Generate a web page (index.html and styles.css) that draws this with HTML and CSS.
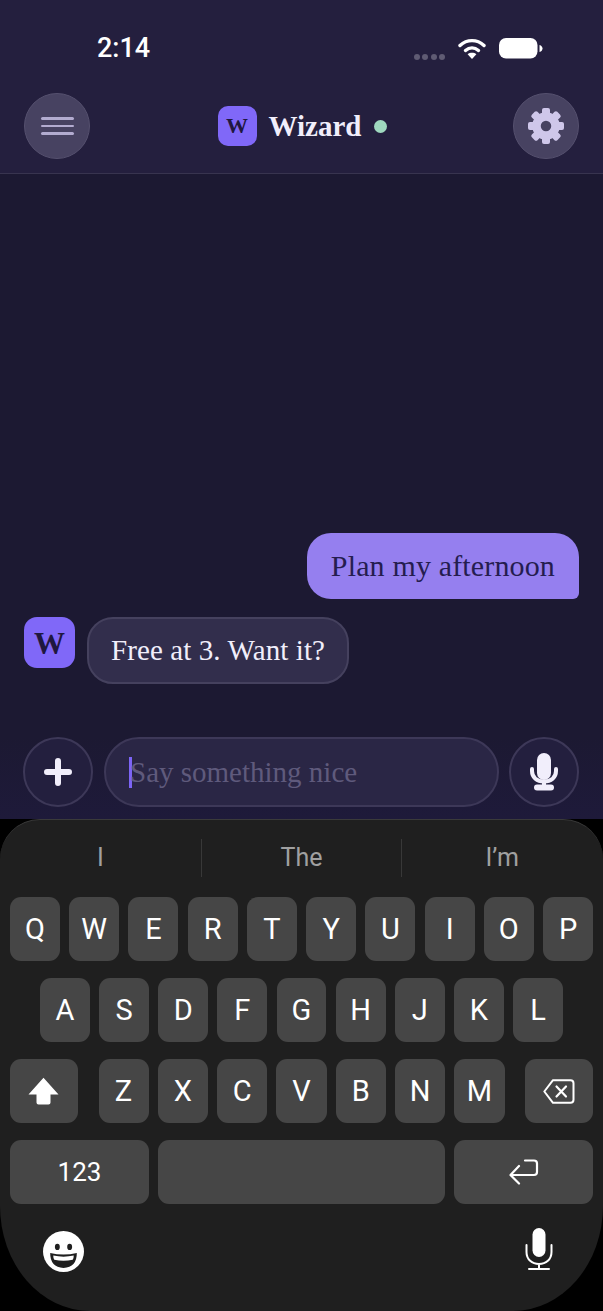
FILE: index.html
```html
<!DOCTYPE html>
<html lang="en">
<head>
<meta charset="utf-8">
<title>Wizard</title>
<link rel="stylesheet" href="styles.css">
</head>
<body>
<div class="app">
  <header class="top">
    <div class="status">
      <span class="time">2:14</span>
      <div class="status-icons">
        <div class="signal"><i></i><i></i><i></i><i></i></div>
        <svg class="wifi" viewBox="0 0 28 21"><path d="M2 7.500C9 1 19 1 26 7.500" fill="none" stroke="#fff" stroke-width="3.400" stroke-linecap="round"/><path d="M7.500 12.500C11.500 9 16.500 9 20.500 12.500" fill="none" stroke="#fff" stroke-width="3.400" stroke-linecap="round"/><path d="M14 21l-4.400-4.800c2.600-1.900 6.200-1.900 8.800 0z" fill="#fff"/></svg>
        <svg class="battery" viewBox="0 0 44 21"><rect x="0" y="0" width="38.500" height="20.500" rx="7" fill="#fff"/><path d="M40.500 7c2 .5 3 2 3 3.500s-1 3-3 3.500z" fill="#fff"/></svg>
      </div>
    </div>
    <div class="nav">
      <button class="round-btn"><span class="burger"><i></i><i></i><i></i></span></button>
      <div class="brand">
        <div class="logo">W</div>
        <span class="brand-name">Wizard</span>
        <span class="online"></span>
      </div>
      <button class="round-btn"><svg class="gear" viewBox="0 0 36 36"><circle cx="18" cy="18" r="9.500" fill="none" stroke="#cfc7ea" stroke-width="8.500"/><g fill="#cfc7ea"><rect x="14" y="0" width="8" height="8" rx="2"/><rect x="14" y="0" width="8" height="8" rx="2" transform="rotate(45 18 18)"/><rect x="14" y="0" width="8" height="8" rx="2" transform="rotate(90 18 18)"/><rect x="14" y="0" width="8" height="8" rx="2" transform="rotate(135 18 18)"/><rect x="14" y="0" width="8" height="8" rx="2" transform="rotate(180 18 18)"/><rect x="14" y="0" width="8" height="8" rx="2" transform="rotate(225 18 18)"/><rect x="14" y="0" width="8" height="8" rx="2" transform="rotate(270 18 18)"/><rect x="14" y="0" width="8" height="8" rx="2" transform="rotate(315 18 18)"/></g></svg></button>
    </div>
  </header>

  <main class="chat">
    <div class="msg-user">Plan my afternoon</div>
    <div class="msg-row">
      <div class="avatar">W</div>
      <div class="msg-bot">Free at 3. Want it?</div>
    </div>
  </main>

  <div class="composer">
    <button class="comp-btn"><svg class="plus" viewBox="0 0 28 28"><path d="M14 3v22M3 14h22" stroke="#f1eefb" stroke-width="6" stroke-linecap="round"/></svg></button>
    <div class="field"><span class="caret"></span><span class="placeholder">Say something nice</span></div>
    <button class="comp-btn"><svg class="mic-fill" viewBox="0 0 30 38"><rect x="8" y="0" width="14" height="27" rx="7" fill="#f1eefb"/><path d="M3 16v2c0 6.500 5 10.500 12 10.500s12-4 12-10.500v-2" fill="none" stroke="#f1eefb" stroke-width="4" stroke-linecap="round"/><rect x="13" y="28" width="4" height="6" fill="#f1eefb"/><rect x="5" y="31.500" width="20" height="6" rx="3" fill="#f1eefb"/></svg></button>
  </div>

  <div class="keyboard">
    <div class="suggest">
      <span>I</span><span>The</span><span>I’m</span>
    </div>
    <div class="row">
      <div class="key">Q</div><div class="key">W</div><div class="key">E</div><div class="key">R</div><div class="key">T</div><div class="key">Y</div><div class="key">U</div><div class="key">I</div><div class="key">O</div><div class="key">P</div>
    </div>
    <div class="row row-a">
      <div class="key">A</div><div class="key">S</div><div class="key">D</div><div class="key">F</div><div class="key">G</div><div class="key">H</div><div class="key">J</div><div class="key">K</div><div class="key">L</div>
    </div>
    <div class="row row-z">
      <div class="key key-mod"><svg class="shift" viewBox="0 0 31 28"><path d="M15.500 .8L30.500 17.500H22.500V25.500Q22.500 27.500 20.500 27.500H10.500Q8.500 27.500 8.500 25.500V17.500H.5z" fill="#fff"/></svg></div>
      <div class="letters"><div class="key">Z</div><div class="key">X</div><div class="key">C</div><div class="key">V</div><div class="key">B</div><div class="key">N</div><div class="key">M</div></div>
      <div class="key key-mod"><svg class="backspace" viewBox="0 0 32 25"><path d="M10 1.200H27.500Q30.500 1.200 30.500 4.200V20.800Q30.500 23.800 27.500 23.800H10L1.300 12.500z" fill="none" stroke="#fff" stroke-width="2" stroke-linejoin="round"/><path d="M13.500 7.500l9.500 10M23 7.500l-9.500 10" stroke="#fff" stroke-width="2.200" stroke-linecap="round"/></svg></div>
    </div>
    <div class="row row-bottom">
      <div class="key key-num">123</div>
      <div class="key key-space"></div>
      <div class="key key-ret"><svg class="ret" viewBox="0 0 30 26"><path d="M16 1.500H25Q28 1.500 28 4.500V13Q28 16 25 16H2" fill="none" stroke="#fff" stroke-width="2.200" stroke-linecap="round"/><path d="M10 7L1.500 16L10 24.500" fill="none" stroke="#fff" stroke-width="2.200" stroke-linecap="round" stroke-linejoin="round"/></svg></div>
    </div>
    <div class="kb-foot">
      <svg class="emoji" viewBox="0 0 40 40"><circle cx="20" cy="20" r="20" fill="#fff"/><ellipse cx="14" cy="15.500" rx="2.400" ry="3" fill="#1f1f1f"/><ellipse cx="26" cy="15.500" rx="2.400" ry="3" fill="#1f1f1f"/><path d="M7 21.500Q20 24.500 33 21.500Q33 35.500 20 36Q7 35.500 7 21.500z" fill="#1f1f1f"/><path d="M10 24Q20 26 30 24Q30 27 29 28Q20 30 11 28Q10 27 10 24z" fill="#fff"/></svg>
      <svg class="dict" viewBox="0 0 28 42"><rect x="7.500" y="0" width="13" height="29" rx="6.500" fill="#fff"/><path d="M1.500 17v7c0 7.500 5.500 12 12.500 12s12.500-4.500 12.500-12v-7M14 36v5M4 41h20" fill="none" stroke="#fff" stroke-width="2" stroke-linecap="round"/></svg>
    </div>
  </div>
</div>
</body>
</html>
```
FILE: styles.css
```css
* { box-sizing: border-box; }
html, body { margin: 0; padding: 0; background: #000; }
.app {
  width: 603px;
  height: 1311px;
  display: flex;
  flex-direction: column;
  overflow: hidden;
  font-family: "Liberation Serif", serif;
}
.top {
  height: 174px;
  background: #241f3e;
  border-bottom: 1px solid #38344f;
  flex: none;
}
.status {
  height: 93px;
  padding: 32px 60px 0 97px;
  display: flex;
  justify-content: space-between;
  align-items: flex-start;
}
.time {
  font-family: Roboto, sans-serif;
  font-weight: 500;
  font-size: 27px;
  line-height: 33px;
  color: #fff;
}
.status-icons { display: flex; align-items: flex-start; padding-top: 6px; }
.signal { display: flex; gap: 2.300px; margin: 16px 13px 0 0; }
.signal i { width: 6px; height: 6px; border-radius: 50%; background: #5f5b73; }
.wifi { width: 28px; height: 21px; margin-right: 13px; }
.battery { width: 44px; height: 21px; }
.nav {
  height: 66px;
  padding: 0 24px;
  display: flex;
  justify-content: space-between;
  align-items: center;
}
.round-btn {
  width: 66px;
  height: 66px;
  padding: 0;
  border-radius: 50%;
  border: 1px solid #55506e;
  background: #474261;
  display: flex;
  align-items: center;
  justify-content: center;
}
.burger { display: flex; flex-direction: column; gap: 5px; width: 33px; }
.burger i { height: 2.500px; border-radius: 2px; background: #b3acd0; }
.gear { width: 36px; height: 36px; }
.brand { display: flex; align-items: center; margin-left: 2px; }
.logo {
  width: 39px;
  height: 40px;
  border-radius: 10px;
  background: #8068f8;
  color: #1f1740;
  font-weight: 700;
  font-size: 22px;
  display: flex;
  align-items: center;
  justify-content: center;
}
.brand-name {
  margin-left: 12px;
  color: #f1eefb;
  font-weight: 700;
  font-size: 29px;
}
.online {
  width: 13px;
  height: 13px;
  margin-left: 13px;
  border-radius: 50%;
  background: #9fd8bf;
}
.chat {
  flex: 1;
  background: #1c1932;
  padding: 0 24px 53px;
  display: flex;
  flex-direction: column;
  justify-content: flex-end;
  align-items: stretch;
  gap: 18px;
}
.msg-user {
  align-self: flex-end;
  height: 66px;
  padding: 0 24px;
  display: flex;
  align-items: center;
  border-radius: 24px 24px 6px 24px;
  background: #957fef;
  color: #251d4f;
  font-size: 30px;
  letter-spacing: .15px;
}
.msg-row { display: flex; align-items: flex-start; gap: 12px; }
.avatar {
  width: 51px;
  height: 51px;
  padding-top: 2px;
  border-radius: 13px;
  background: #8068f8;
  color: #1f1740;
  font-weight: 700;
  font-size: 31px;
  display: flex;
  align-items: center;
  justify-content: center;
}
.msg-bot {
  height: 67px;
  padding: 0 22px;
  display: flex;
  align-items: center;
  border-radius: 26px;
  background: #322e4c;
  border: 2px solid #45415e;
  color: #f1eefb;
  font-size: 29px;
  letter-spacing: .1px;
}
.composer {
  height: 82px;
  flex: none;
  background: linear-gradient(#1c1932, #1e1a3a);
  padding: 0 24px 12px 23px;
  display: flex;
  gap: 10px;
  align-items: flex-start;
}
.comp-btn {
  width: 70px;
  height: 70px;
  flex: none;
  padding: 0;
  border-radius: 50%;
  border: 2px solid #3d3858;
  background: #231f3e;
  display: flex;
  align-items: center;
  justify-content: center;
}
.comp-btn:first-child { margin-right: 1px; }
.plus { width: 28px; height: 28px; }
.mic-fill { width: 30px; height: 38px; }
.field {
  flex: 1;
  height: 70px;
  padding-left: 23px;
  border-radius: 35px;
  border: 2px solid #3d3858;
  background: #2a2645;
  display: flex;
  align-items: center;
}
.caret { width: 3px; height: 31px; background: #7c64f6; flex: none; }
.placeholder { color: #5f5a7c; font-size: 29px; margin-left: -2px; }
.keyboard {
  flex: none;
  height: 492px;
  background: #1f1f1f;
  border-top: 1px solid #3a3a3a;
  border-radius: 40px 40px 90px 90px / 40px 40px 105px 105px;
  padding: 0 10px;
  font-family: Roboto, sans-serif;
  color: #fff;
}
.suggest {
  height: 77px;
  display: grid;
  grid-template-columns: repeat(3, 1fr);
  align-items: center;
  color: #a0a0a0;
  font-size: 25px;
  margin: 0 -10px;
  padding: 0 1px 2px 0;
}
.suggest span {
  text-align: center;
  height: 38px;
  line-height: 38px;
  border-left: 1px solid #383838;
}
.suggest span:first-child { border-left: 0; }
.row { display: flex; gap: 9.300px; height: 64px; margin-bottom: 17px; }
.key {
  flex: 1;
  background: #464646;
  border-radius: 11px;
  font-size: 29px;
  display: flex;
  align-items: center;
  justify-content: center;
}
.row-a { padding: 0 30px; }
.row-z { gap: 0; justify-content: space-between; }
.letters { display: flex; gap: 9.300px; width: 406px; flex: none; }
.key-mod { flex: none; width: 68px; }
.row-bottom { gap: 9px; }
.key-num { flex: none; width: 139px; font-size: 26px; }
.key-space { flex: none; width: 287px; }
.key-ret { flex: none; width: 139px; }
.shift { width: 31px; height: 28px; margin-right: 2px; }
.backspace { width: 32px; height: 25px; }
.ret { width: 30px; height: 26px; }
.kb-foot {
  display: flex;
  justify-content: space-between;
  align-items: flex-start;
  padding: 7px 40px 0 33px;
}
.emoji { width: 41px; height: 41px; margin-top: 3px; }
.dict { width: 28px; height: 42px; }
```
